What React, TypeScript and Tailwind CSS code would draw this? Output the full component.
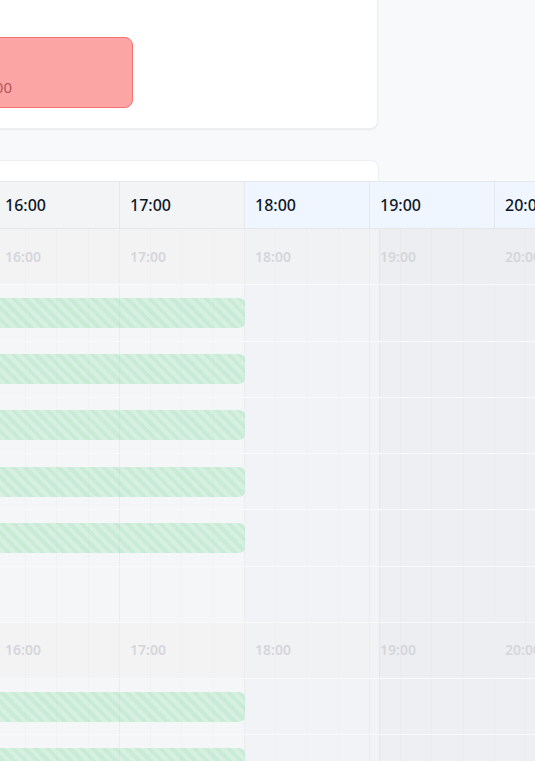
import React from 'react';

const hours = ['16:00', '17:00', '18:00', '19:00', '20:00'];

type RowKind = 'label' | 'bar' | 'empty';
const rows: RowKind[] = ['label', 'bar', 'bar', 'bar', 'bar', 'bar', 'empty', 'label', 'bar', 'bar'];

// quarter-hour guide lines, one set per hour column
const labelCells = [
  'bg-[#f3f3f4] bg-[repeating-linear-gradient(90deg,transparent_0_30.25px,rgba(0,0,0,0.015)_30.25px_31.25px)]',
  'bg-[#f3f3f4] bg-[repeating-linear-gradient(90deg,transparent_0_30.25px,rgba(0,0,0,0.015)_30.25px_31.25px)]',
  'bg-[#f1f2f4] bg-[repeating-linear-gradient(90deg,transparent_0_30.25px,rgba(0,0,0,0.015)_30.25px_31.25px)]',
  'bg-[#edeef1] bg-[repeating-linear-gradient(90deg,transparent_0_30.25px,rgba(0,0,0,0.015)_30.25px_31.25px),linear-gradient(90deg,#f1f2f4_0_9px,#e4e5e9_9px_10px,transparent_10px)]',
  'bg-[#edeef1] bg-[repeating-linear-gradient(90deg,transparent_0_30.25px,rgba(0,0,0,0.015)_30.25px_31.25px)]',
];

const plainCells = [
  'bg-[#f5f6f8] bg-[repeating-linear-gradient(90deg,transparent_0_30.25px,rgba(0,0,0,0.015)_30.25px_31.25px)]',
  'bg-[#f5f6f8] bg-[repeating-linear-gradient(90deg,transparent_0_30.25px,rgba(0,0,0,0.015)_30.25px_31.25px)]',
  'bg-[#f2f3f6] bg-[repeating-linear-gradient(90deg,transparent_0_30.25px,rgba(0,0,0,0.015)_30.25px_31.25px)]',
  'bg-[#edeff2] bg-[repeating-linear-gradient(90deg,transparent_0_30.25px,rgba(0,0,0,0.015)_30.25px_31.25px),linear-gradient(90deg,#f2f3f6_0_9px,#e4e6e9_9px_10px,transparent_10px)]',
  'bg-[#edeff2] bg-[repeating-linear-gradient(90deg,transparent_0_30.25px,rgba(0,0,0,0.015)_30.25px_31.25px)]',
];

function TimelineRow({ kind }: { kind: RowKind }) {
  const cells = kind === 'label' ? labelCells : plainCells;
  return (
    <div className="grid h-[56.25px] grid-cols-[repeat(5,125px)] border-b border-[#f8f9fa]">
      {hours.map((h, i) => (
        <div
          key={h}
          className={`row-start-1 flex items-center border-r border-[#ebecef] pl-[10px] ${cells[i]}`}
          style={{ gridColumnStart: i + 1 }}
        >
          {kind === 'label' && (
            <span className="text-sm font-semibold text-[#d5d6db]">{h}</span>
          )}
        </div>
      ))}
      {kind === 'bar' && (
        <div className="col-span-2 col-start-1 row-start-1 h-[30px] self-center rounded-r-md bg-[repeating-linear-gradient(45deg,rgba(115,215,150,0.34)_0_4px,rgba(150,228,175,0.32)_4px_8px)]" />
      )}
    </div>
  );
}

export default function App() {
  return (
    <div className="h-[761px] w-full overflow-hidden bg-[#f8f9fb] font-['Noto_Sans',sans-serif]">
      {/* booking card */}
      <div className="-ml-[24px] -mt-[24px] h-[153px] w-[402px] rounded-lg border border-[#eceef1] bg-white pt-[60px] shadow-[0_1px_2px_rgba(0,0,0,0.06)]">
        <div className="flex h-[71px] w-[156px] flex-col justify-end rounded-lg border border-[#f87171] bg-[#fca5a5] pb-[9px]">
          <div className="flex w-[34px] justify-end">
            <span className="shrink-0 whitespace-nowrap text-[15px] text-[#b05558]">09:00 - 10:00</span>
          </div>
        </div>
      </div>

      {/* timeline card */}
      <div className="-ml-[5px] mt-[31px] w-[384px] rounded-t-lg border-r border-t border-[#eceef1] bg-white pt-[20px]">
        <div className="w-[625px]">
          <div className="flex border-y border-[#e5e7eb]">
            {hours.map((h, i) => (
              <div
                key={h}
                className={`flex h-[46px] w-[125px] shrink-0 items-center border-r border-[#e5e7eb] pl-[10px] ${
                  i < 2 ? 'bg-gray-100' : 'bg-blue-50'
                }`}
              >
                <span className="text-base font-medium text-gray-900">{h}</span>
              </div>
            ))}
          </div>
          {rows.map((kind, i) => (
            <TimelineRow key={i} kind={kind} />
          ))}
        </div>
      </div>
    </div>
  );
}
